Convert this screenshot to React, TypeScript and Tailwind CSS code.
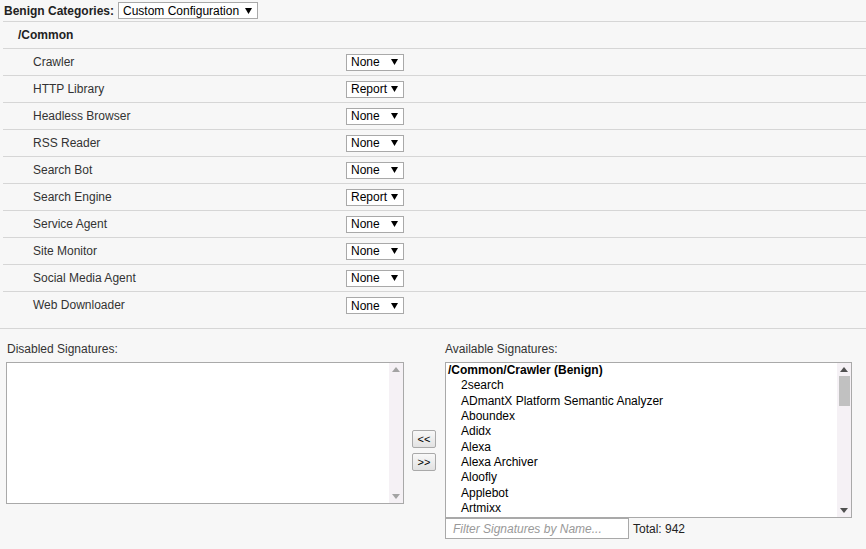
import React from 'react';

const rows: [string, string][] = [
    ['Crawler', 'None'],
    ['HTTP Library', 'Report'],
    ['Headless Browser', 'None'],
    ['RSS Reader', 'None'],
    ['Search Bot', 'None'],
    ['Search Engine', 'Report'],
    ['Service Agent', 'None'],
    ['Site Monitor', 'None'],
    ['Social Media Agent', 'None'],
    ['Web Downloader', 'None'],
];

const signatures = [
    '2search',
    'ADmantX Platform Semantic Analyzer',
    'Aboundex',
    'Adidx',
    'Alexa',
    'Alexa Archiver',
    'Aloofly',
    'Applebot',
    'Artmixx',
];

function Caret({ className = '' }: { className?: string }) {
    return (
        <svg width="7" height="6" viewBox="0 0 7 6" className={className}>
            <path d="M0 0 H7 L3.5 6 Z" fill="currentColor" />
        </svg>
    );
}

function Dropdown({ value, wide }: { value: string; wide?: boolean }) {
    return (
        <div className={`flex items-center justify-between h-[17px] bg-white border border-[#a9a9a9] pl-[4px] pr-[5px] text-[12px] text-black ${wide ? 'gap-[6px]' : 'w-[58px]'}`}>
            <span className="leading-none">{value}</span>
            <Caret className="text-black" />
        </div>
    );
}

function Scrollbar({ active }: { active?: boolean }) {
    const arrow = active ? 'text-[#505050]' : 'text-[#a3a3a3]';
    return (
        <div className="w-[14px] h-full bg-[#f5f1f5] flex flex-col items-center justify-between py-[4px]">
            <div className="flex flex-col items-center w-full">
                <svg width="8" height="5" viewBox="0 0 8 5" className={arrow}>
                    <path d="M0 5 L4 0 L8 5 Z" fill="currentColor" />
                </svg>
                {active && <div className="mt-[4px] w-[11px] h-[30px] bg-[#c1c1c1]" />}
            </div>
            <svg width="8" height="5" viewBox="0 0 8 5" className={arrow}>
                <path d="M0 0 L8 0 L4 5 Z" fill="currentColor" />
            </svg>
        </div>
    );
}

export default function App() {
    return (
        <div className="w-[866px] h-[549px] bg-[#f7f7f7] font-['Liberation_Sans',Arial,sans-serif] text-[12px] text-[#222] overflow-hidden">
            {/* Benign categories header */}
            <div className="h-[22px] flex items-center gap-[4px] pl-[1px] border-b border-[#d6d6d6] ml-[3px]">
                <span className="font-bold text-[#222]">Benign Categories:</span>
                <Dropdown value="Custom Configuration" wide />
            </div>

            <div className="ml-[3px]">
                <div className="h-[27px] flex items-center pl-[15px] pb-[1px] border-b border-[#d6d6d6] font-bold text-[#222]">
                    /Common
                </div>
                {rows.map(([label, value], i) => (
                    <div
                        key={label}
                        className={`h-[27px] flex items-center ${i < rows.length - 1 ? 'border-b border-[#d6d6d6]' : ''}`}
                    >
                        <span className="w-[343px] pl-[30px] pb-[1px] text-[#333]">{label}</span>
                        <Dropdown value={value} />
                    </div>
                ))}
            </div>

            <div className="h-[10px] border-b border-[#d6d6d6]" />

            {/* Signatures */}
            <div className="flex pt-[13px]">
                <div className="w-[445px] pl-[6px] flex flex-col">
                    <div className="h-[15px] pl-[1px] text-[#333] leading-[14px]">Disabled Signatures:</div>
                    <div className="mt-[5px] w-[398px] h-[142px] bg-white border border-[#a9a9a9] flex justify-end">
                        <Scrollbar />
                    </div>
                </div>

                <div className="flex flex-col">
                    <div className="h-[15px] text-[#333] leading-[14px]">Available Signatures:</div>
                    <div className="mt-[5px] w-[407px] h-[156px] bg-white border border-[#a9a9a9] flex">
                        <div className="flex-1 pl-[2px] text-[12px] text-black leading-[15.35px]">
                            <div className="font-bold">/Common/Crawler (Benign)</div>
                            {signatures.map((s) => (
                                <div key={s} className="pl-[13px]">{s}</div>
                            ))}
                        </div>
                        <Scrollbar active />
                    </div>
                    <div className="flex items-center">
                        <div className="w-[184px] h-[21px] bg-white border border-[#a9a9a9] pl-[7px] flex items-center italic text-[#999] text-[12px]">
                            Filter Signatures by Name...
                        </div>
                        <span className="ml-[4px] text-[#222]">Total: 942</span>
                    </div>
                </div>
            </div>

            {/* move buttons */}
            <div className="relative">
                <div className="absolute left-[412px] top-[-109px] flex flex-col gap-[5px]">
                    <button className="w-[24px] h-[18px] border border-[#a9a9a9] rounded-[2px] bg-gradient-to-b from-[#f8f8f8] to-[#e2e2e2] text-[11px] leading-none text-black">&lt;&lt;</button>
                    <button className="w-[24px] h-[18px] border border-[#a9a9a9] rounded-[2px] bg-gradient-to-b from-[#f8f8f8] to-[#e2e2e2] text-[11px] leading-none text-black">&gt;&gt;</button>
                </div>
            </div>
        </div>
    );
}
